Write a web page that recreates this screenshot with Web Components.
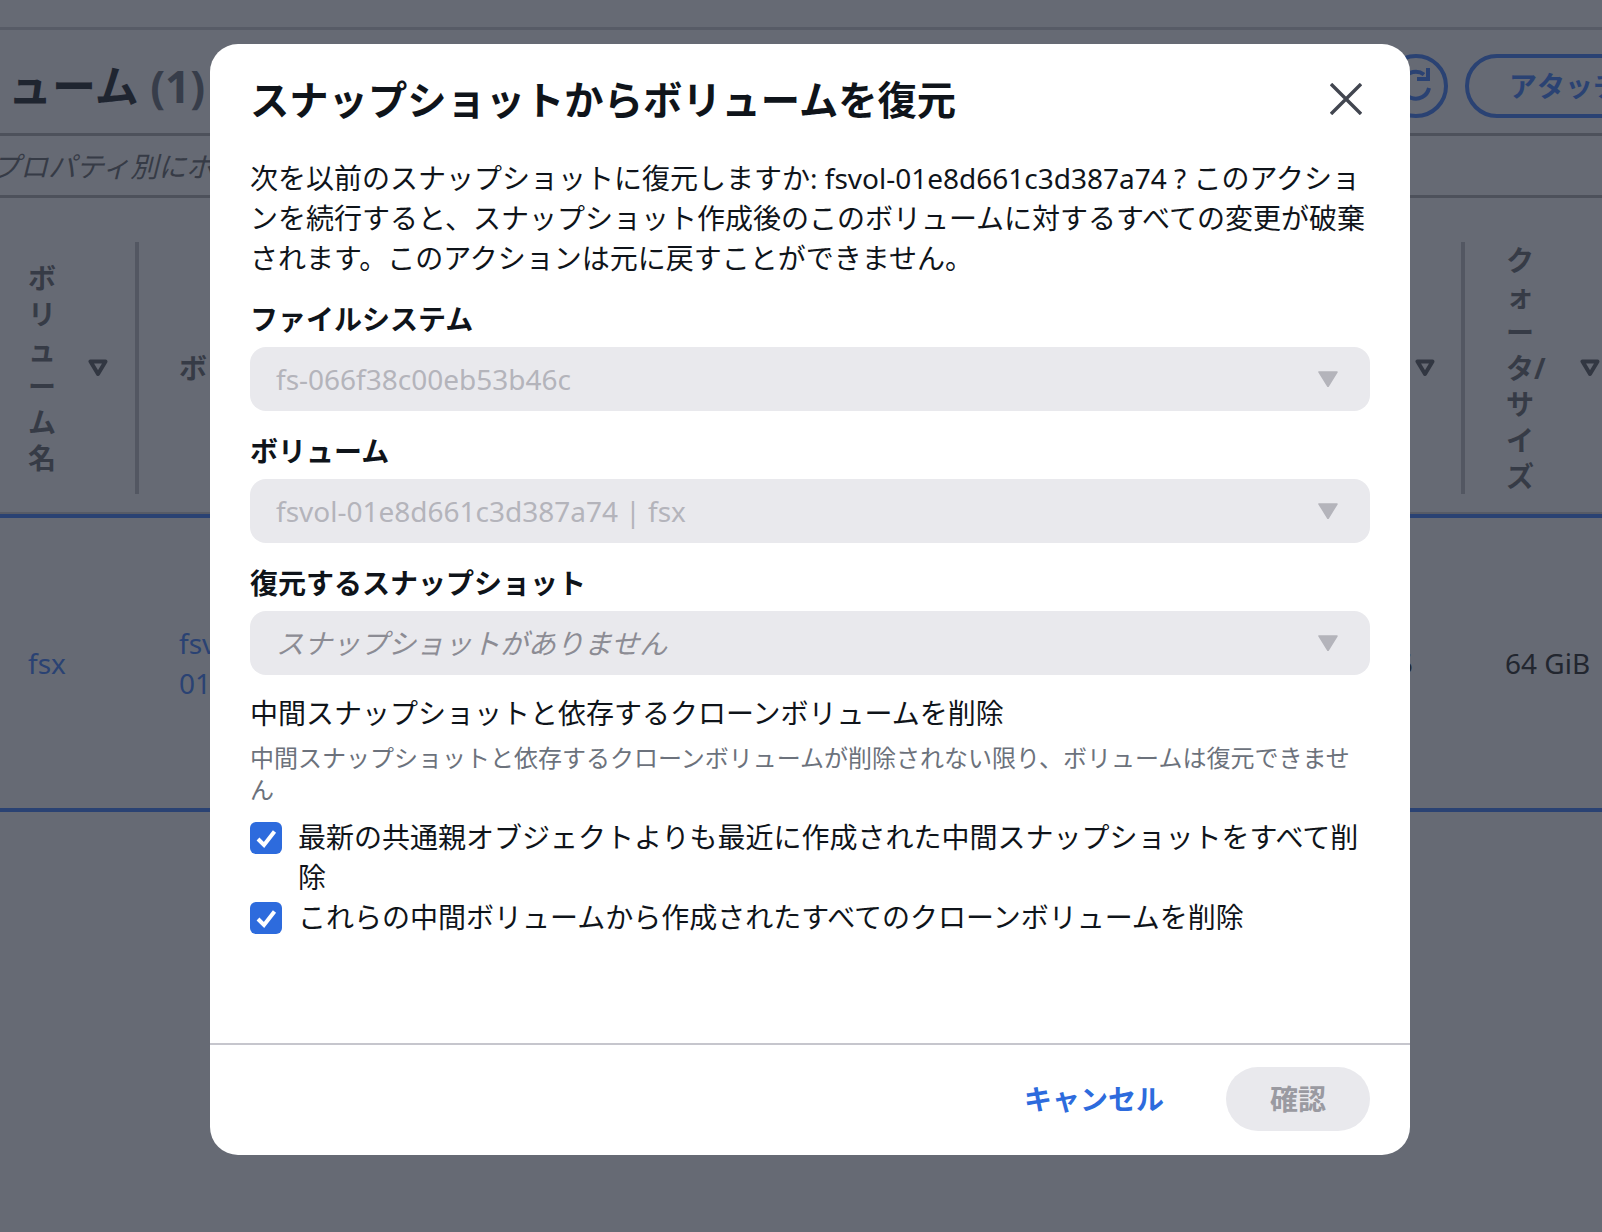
<!DOCTYPE html>
<html lang="ja">
<head>
<meta charset="utf-8">
<title>スナップショットからボリュームを復元</title>
<style>
html,body{margin:0;padding:0;background:#666a74;}
body{font-family:"Noto Sans","Noto Sans CJK JP",sans-serif;font-size:28px;line-height:40px;color:#0f141a;}
</style>
</head>
<body>
<x-app>
  <x-volume-page slot="page"></x-volume-page>
  <x-modal slot="modal" heading="スナップショットからボリュームを復元">
    <p>次を以前のスナップショットに復元しますか: fsvol-01e8d661c3d387a74 ? このアクションを続行すると、スナップショット作成後のこのボリュームに対するすべての変更が破棄されます。このアクションは元に戻すことができません。</p>
    <x-select label="ファイルシステム" value="fs-066f38c00eb53b46c"></x-select>
    <x-select label="ボリューム" value="fsvol-01e8d661c3d387a74 | fsx"></x-select>
    <x-select label="復元するスナップショット" value="スナップショットがありません" placeholder></x-select>
    <x-check-group heading="中間スナップショットと依存するクローンボリュームを削除" description="中間スナップショットと依存するクローンボリュームが削除されない限り、ボリュームは復元できません">
      <x-checkbox>最新の共通親オブジェクトよりも最近に作成された中間スナップショットをすべて削除</x-checkbox>
      <x-checkbox>これらの中間ボリュームから作成されたすべてのクローンボリュームを削除</x-checkbox>
    </x-check-group>
    <x-button slot="footer" variant="link">キャンセル</x-button>
    <x-button slot="footer" variant="disabled">確認</x-button>
  </x-modal>
</x-app>
<script>
function define(name, css, html, init){
  customElements.define(name, class extends HTMLElement{
    constructor(){
      super();
      const r=this.attachShadow({mode:"open"});
      r.innerHTML="<style>"+css+"</style>"+html;
    }
    connectedCallback(){ if(init) init(this,this.shadowRoot); }
  });
}

define("x-app",`
  :host{display:block;position:relative;width:1602px;height:1232px;overflow:hidden;background:#666a74;}
  .modal{position:absolute;left:210px;top:44px;}
`,`<slot name="page"></slot><div class="modal"><slot name="modal"></slot></div>`);

const TRI=`<svg class="tri" width="20" height="18" viewBox="0 0 20 18"><path d="M2.5 2.5H17.5L10 15Z" fill="none" stroke="#323742" stroke-width="4" stroke-linejoin="round"/></svg>`;

define("x-volume-page",`
  :host{display:block;width:1602px;height:1232px;overflow:hidden;color:#1f2530;}
  .top{height:27px;border-bottom:3px solid #575b66;}
  .head{height:106px;display:flex;align-items:center;padding-top:9px;border-bottom:3px solid #4d515b;box-sizing:border-box;}
  h1{margin:0 0 0 -80px;font-size:44px;line-height:56px;font-weight:700;white-space:nowrap;flex:none;}
  h1 span{color:#373d4a;}
  .actions{margin-left:auto;display:flex;gap:17px;flex:none;margin-right:-63px;}
  .round{width:64px;height:64px;box-sizing:border-box;border:4px solid #2a4273;border-radius:50%;display:flex;align-items:center;justify-content:center;}
  .pill{height:64px;box-sizing:border-box;border:4px solid #2a4273;border-radius:32px;padding:0 40px;display:flex;align-items:center;font-weight:700;color:#2a4273;white-space:nowrap;}
  .filter{height:62px;box-sizing:border-box;display:flex;align-items:center;font-style:italic;color:#363b46;border-bottom:3px solid #4d515b;white-space:nowrap;}
  .filter span{margin-left:-8px;}
  .grid{display:grid;grid-template-columns:139px 300px 1026px 200px;}
  .th{height:316px;box-sizing:border-box;padding:44px 0 18px;display:flex;align-items:center;border-bottom:2px solid #575b66;color:#363b46;font-weight:700;line-height:36px;}
  .th .in{flex:1;align-self:stretch;display:flex;align-items:center;justify-content:space-between;border-right:4px solid #535762;min-width:0;}
  .th:last-child .in{border-right:0;}
  .a{padding-left:28px;padding-right:27px;}
  .b{padding-left:40px;padding-right:27px;border-right:0!important;}
  .c{padding-right:26px;justify-content:flex-end!important;}
  .d{padding-left:41px;justify-content:flex-start!important;gap:34px;}
  .d span{white-space:nowrap;}
  .td{height:290px;border-top:4px solid #2a4273;border-bottom:4px solid #2a4273;display:flex;align-items:center;color:#2a4273;}
  .td.g{color:#22262f;padding-left:40px;}
  .td.a1{padding-left:28px;}
  .td.b1{padding-left:40px;}
  .td.c1{justify-content:flex-end;padding-right:52px;color:#22262f;}
  .tri{flex:none;}
`,`
  <div class="top"></div>
  <div class="head">
    <h1>ボリューム <span>(1)</span></h1>
    <div class="actions">
      <div class="round"><svg width="40" height="40" viewBox="0 0 40 40" fill="none" stroke="#2a4273" stroke-width="4"><path d="M33 22A13.5 13.5 0 1 1 28 8.5"/><path d="M32 2V13H21"/></svg></div>
      <div class="pill">アタッチ</div>
    </div>
  </div>
  <div class="filter"><span>プロパティ別にボリュームを検索</span></div>
  <div class="grid">
    <div class="th"><div class="in a"><span>ボ<br>リ<br>ュ<br>ー<br>ム<br>名</span>${TRI}</div></div>
    <div class="th"><div class="in b"><span>ボ</span></div></div>
    <div class="th"><div class="in c">${TRI}</div></div>
    <div class="th"><div class="in d"><span>ク<br>ォ<br>ー<br>タ/<br>サ<br>イ<br>ズ</span>${TRI}</div></div>
    <div class="td a1">fsx</div>
    <div class="td b1"><span>fsvol-<br>01e8d661c3d387a74</span></div>
    <div class="td c1">5</div>
    <div class="td g">64 GiB</div>
  </div>
`);

define("x-modal",`
  :host{display:flex;flex-direction:column;width:1200px;height:1111px;box-sizing:border-box;background:#fff;border-radius:28px;overflow:hidden;color:#0f141a;}
  header{display:flex;justify-content:space-between;align-items:center;padding:28px 40px 0;height:84px;box-sizing:border-box;}
  h2{margin:0;font-size:39.3px;line-height:56px;font-weight:700;}
  svg{display:block;margin:-2px 8px 0 0;}
  .body{flex:1;padding:30px 40px 0;min-height:0;}
  ::slotted(p){margin:0 0 21px;font-size:28px;line-height:40px;}
  footer{border-top:2px solid #c6c6cd;height:112px;box-sizing:border-box;padding:22px 40px 0;display:flex;justify-content:flex-end;gap:40px;}
`,`
  <header><h2 id="t"></h2><svg width="32" height="32" viewBox="0 0 32 32" fill="none" stroke="#424650" stroke-width="3.4"><path d="M1 1L31 31M31 1L1 31"/></svg></header>
  <div class="body"><slot></slot></div>
  <footer><slot name="footer"></slot></footer>
`,(h,r)=>{r.getElementById("t").textContent=h.getAttribute("heading");});

define("x-select",`
  :host{display:block;margin-bottom:20px;}
  label{display:block;font-weight:700;line-height:40px;margin-bottom:8px;}
  .box{height:64px;box-sizing:border-box;background:#e9e9ed;border-radius:16px;padding:0 32px 0 26px;display:flex;align-items:center;justify-content:space-between;color:#b4b4bb;}
  .box.ph{font-style:italic;color:#8c8c94;}
  svg{flex:none;}
`,`
  <label id="l"></label>
  <div class="box" id="b"><span id="v"></span><svg width="20" height="16" viewBox="0 0 20 16"><path d="M1 1H19L10 15.5Z" fill="#b4b4bb" stroke="#b4b4bb" stroke-width="1.5" stroke-linejoin="round"/></svg></div>
`,(h,r)=>{
  r.getElementById("l").textContent=h.getAttribute("label");
  r.getElementById("v").textContent=h.getAttribute("value");
  if(h.hasAttribute("placeholder")) r.getElementById("b").classList.add("ph");
});

define("x-check-group",`
  :host{display:block;margin-top:-2px;}
  .h{line-height:40px;margin-bottom:9px;}
  .d{font-size:24px;line-height:32px;color:#6c727c;margin-bottom:11px;}
`,`<div class="h" id="h"></div><div class="d" id="d"></div><slot></slot>`,(h,r)=>{
  r.getElementById("h").textContent=h.getAttribute("heading");
  r.getElementById("d").textContent=h.getAttribute("description");
});

define("x-checkbox",`
  :host{display:flex;gap:16px;line-height:40px;}
  svg{flex:none;margin-top:5px;}
`,`<svg width="32" height="32" viewBox="0 0 32 32"><rect width="32" height="32" rx="6" fill="#2d6bdd"/><path d="M8 17L14 23L24.5 9.5" fill="none" stroke="#fff" stroke-width="4"/></svg><span><slot></slot></span>`);

define("x-button",`
  :host{display:flex;align-items:center;justify-content:center;height:64px;box-sizing:border-box;padding:0 44px;border-radius:32px;font-weight:700;white-space:nowrap;}
  :host([variant=link]){color:#2d6bdd;padding:0 22px;}
  :host([variant=disabled]){background:#e9e9ed;color:#9a9aa1;}
`,`<slot></slot>`);
</script>
</body>
</html>
